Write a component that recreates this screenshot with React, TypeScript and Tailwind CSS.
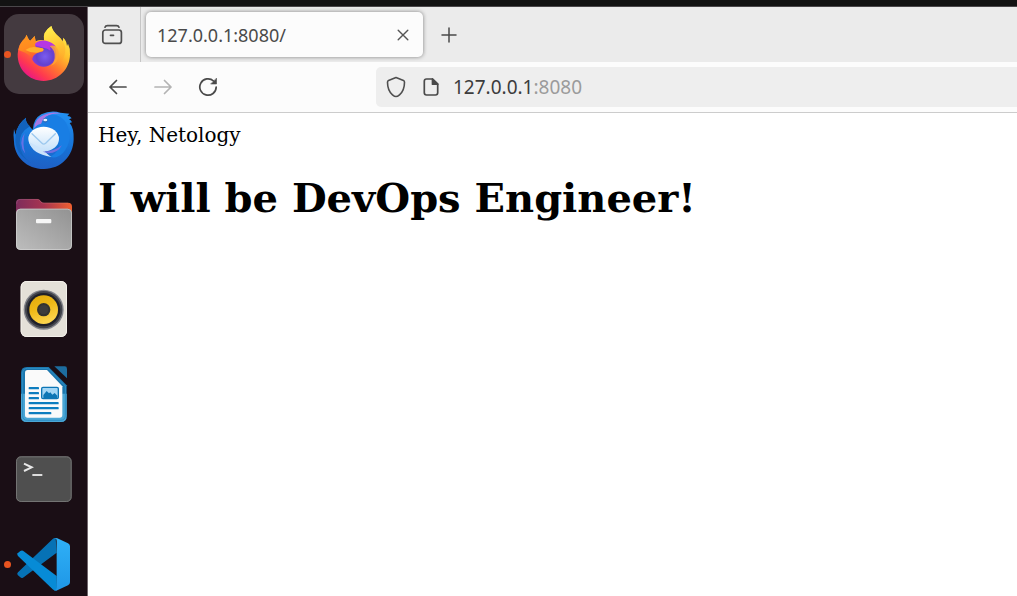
import type { ReactNode } from "react";

type DockEntry = {
  name: string;
  running?: boolean;
  active?: boolean;
  icon: ReactNode;
};

function FirefoxIcon() {
  return (
    <svg viewBox="12 42 240 240" className="size-20" aria-hidden="true">
      <defs>
        <linearGradient id="fxBody" x1="0.85" y1="0.1" x2="0.2" y2="0.95">
          <stop offset="0" stopColor="#ffe94a" />
          <stop offset="0.3" stopColor="#ffc02c" />
          <stop offset="0.55" stopColor="#ff7a2e" />
          <stop offset="0.8" stopColor="#ff3a4e" />
          <stop offset="1" stopColor="#e8148a" />
        </linearGradient>
        <linearGradient id="fxFlame" x1="0.3" y1="0" x2="0.5" y2="1">
          <stop offset="0" stopColor="#fff04f" />
          <stop offset="0.5" stopColor="#ffc833" />
          <stop offset="1" stopColor="#ff8a2a" stopOpacity="0" />
        </linearGradient>
        <radialGradient id="fxGlobe" cx="0.55" cy="0.6" r="0.6">
          <stop offset="0" stopColor="#7a5cf0" />
          <stop offset="0.55" stopColor="#6442cf" />
          <stop offset="1" stopColor="#9a35e0" />
        </radialGradient>
        <linearGradient id="fxHead" x1="0" y1="0" x2="0.3" y2="1">
          <stop offset="0" stopColor="#ff9a1f" />
          <stop offset="0.6" stopColor="#ff8a20" />
          <stop offset="1" stopColor="#ff5a35" />
        </linearGradient>
      </defs>
      <path
        d="M80 104 Q84 118 91 122 L104 108 L107 124 Q118 118 132 121 Q127 96 154 78 Q158 94 174 108 Q184 116 187 126 Q190 120 189 113 Q200 121 201 138 L204 131 Q211 144 210 163 C210 207 175 243 131 243 C86 243 52 207 53 163 Q54 138 67 123 Q78 112 80 104Z"
        fill="url(#fxBody)"
      />
      <path
        d="M132 121 Q127 96 154 78 Q158 94 174 108 C196 126 201 148 191 174 C184 192 172 199 154 203 C170 184 174 157 160 139 C151 127 142 123 132 121Z"
        fill="url(#fxFlame)"
      />
      <circle cx="131" cy="162" r="38" fill="url(#fxGlobe)" />
      <path d="M102 134 Q116 119 138 122 Q158 126 168 140 Q156 136 149 140 Q153 147 151 152 Q143 144 130 143Z" fill="#b637e3" />
      <path d="M149 139 Q167 151 164 174 Q162 189 151 198 Q173 191 176 168 Q178 149 166 139 Q158 134 149 139Z" fill="#ffa534" opacity="0.85" />
      <path
        d="M80 104 Q84 118 91 122 L104 108 Q106 120 107 125 Q103 134 108 142 L128 145 Q133 148 129 154 L112 159 Q98 165 97 177 Q88 164 76 158 L55 150 Q58 133 67 123 Q78 112 80 104Z"
        fill="url(#fxHead)"
      />
      <path d="M76 150 Q92 139 108 142 L127 145 Q133 147 129 153 L111 158 Q92 159 76 150Z" fill="#ffb02c" />
    </svg>
  );
}

function ThunderbirdIcon() {
  return (
    <svg viewBox="12 -3 240 240" className="size-20" aria-hidden="true">
      <defs>
        <linearGradient id="tbBody" x1="0.5" y1="0" x2="0.4" y2="1">
          <stop offset="0" stopColor="#2290f2" />
          <stop offset="0.6" stopColor="#1671d6" />
          <stop offset="1" stopColor="#1f5fc4" />
        </linearGradient>
        <linearGradient id="tbMail" x1="0" y1="0" x2="0" y2="1">
          <stop offset="0" stopColor="#ffffff" />
          <stop offset="1" stopColor="#c5e1fa" />
        </linearGradient>
      </defs>
      <path
        d="M42 87 L47 104 Q51 73 78 53 Q76 66 88 78 Q94 85 98 89 Q100 56 124 43 Q153 29 181 38 L208 41 L202 48 Q211 48 215 55 L207 58 Q214 61 216 67 L209 69 Q222 84 221 118 C220 168 183 207 132 207 C80 207 43 170 42 125 Q39 104 42 87Z"
        fill="url(#tbBody)"
      />
      <path d="M47 104 Q51 73 78 53 Q75 67 90 79 Q58 97 59 130 Q61 170 93 188 Q56 168 49 139 Q44 121 47 104Z" fill="#1262bd" />
      <path d="M74 99 Q52 131 76 161 Q66 132 74 99Z" fill="#6572e5" />
      <path d="M102 85 Q104 56 131 45 Q157 32 184 41 Q155 39 137 51 Q128 59 124 71 Q112 72 102 85Z" fill="#a778e6" />
      <path d="M124 71 Q128 54 147 46 Q179 38 199 70 Q223 119 189 159 Q170 178 148 170 Q183 156 178 116 Q172 85 137 80Z" fill="#197ee4" />
      <ellipse cx="131" cy="117" rx="46" ry="37" fill="url(#tbMail)" />
      <path d="M88 126 Q94 161 154 171 Q138 160 133 151Z" fill="#cce4fb" />
      <path d="M96 101 L126 130 Q131 135 137 130 L166 101" fill="none" stroke="#9cc8ee" strokeWidth="4" strokeLinecap="round" />
      <path d="M128 155 Q162 155 186 136 Q173 160 145 160Z" fill="#706fe0" />
      <circle cx="136" cy="61" r="7" fill="#2c68bc" />
      <ellipse cx="136" cy="60" rx="6" ry="4" fill="#dff2ff" />
    </svg>
  );
}

function FilesIcon() {
  return (
    <svg viewBox="12 -3 240 240" className="size-20" aria-hidden="true">
      <defs>
        <linearGradient id="flBack" x1="0" y1="0" x2="1" y2="0">
          <stop offset="0" stopColor="#7d2c5c" />
          <stop offset="0.5" stopColor="#a83550" />
          <stop offset="1" stopColor="#ef6030" />
        </linearGradient>
        <linearGradient id="flFront" x1="1" y1="0" x2="0" y2="1">
          <stop offset="0" stopColor="#929292" />
          <stop offset="1" stopColor="#bdbdbd" />
        </linearGradient>
      </defs>
      <path d="M48 100 V54 Q48 42 60 42 H112 Q117 42 120 46 L125 51 Q127 53 132 53 H204 Q216 53 216 65 V100Z" fill="url(#flBack)" />
      <path d="M50 56 Q50 43 62 43 H112 Q117 43 120 47 L124 52 Q127 54 132 54 H204" fill="none" stroke="#ffffff" strokeOpacity="0.2" strokeWidth="2" />
      <rect x="48" y="71" width="168" height="124" rx="13" fill="url(#flFront)" />
      <rect x="49.500" y="72.500" width="165" height="121" rx="12" fill="none" stroke="#d8d8d8" strokeOpacity="0.6" strokeWidth="3" />
      <rect x="108" y="102" width="46" height="13" rx="3" fill="#f6f6f6" />
    </svg>
  );
}

function MusicIcon() {
  return (
    <svg viewBox="12 -3 240 240" className="size-20" aria-hidden="true">
      <defs>
        <linearGradient id="muCone" x1="0" y1="0" x2="0.4" y2="1">
          <stop offset="0" stopColor="#dfa90b" />
          <stop offset="0.5" stopColor="#efb917" />
          <stop offset="1" stopColor="#fbd34b" />
        </linearGradient>
      </defs>
      <rect x="62" y="33" width="139" height="168" rx="17" fill="#e4e0d8" />
      <rect x="63.500" y="34.500" width="136" height="165" rx="16" fill="none" stroke="#f3f0ea" strokeWidth="3" />
      <circle cx="131" cy="119" r="60" fill="#84858b" />
      <circle cx="131" cy="119" r="56" fill="#42444c" />
      <circle cx="131" cy="119" r="50" fill="#1f2029" />
      <circle cx="131" cy="119" r="43" fill="url(#muCone)" />
      <circle cx="131" cy="119" r="20" fill="#33332f" />
      <circle cx="131" cy="119" r="14" fill="#3c3c3c" />
    </svg>
  );
}

function WriterIcon() {
  return (
    <svg viewBox="12 -3 240 240" className="size-20" aria-hidden="true">
      <path d="M80 36 H146 L200 91 V183 Q200 201 182 201 H80 Q63 201 63 183 V54 Q63 36 80 36Z" fill="#1b76ad" />
      <path d="M63 116 H200 V183 Q200 201 182 201 H80 Q63 201 63 183Z" fill="#4ba6d4" />
      <path d="M82 40 H144 L196 93 V181 Q196 196 180 196 H83 Q68 196 68 181 V55 Q68 40 82 40Z" fill="none" stroke="#2e8fc5" strokeWidth="3" />
      <path d="M83 45 H141 L187 94 V180 Q187 188 179 188 H83 Q75 188 75 180 V53 Q75 45 83 45Z" fill="#fafafa" />
      <path d="M163 34 H194 Q201 34 201 41 V70Z" fill="#1d6d9f" />
      <g fill="#0d7dbf">
        <rect x="86" y="96" width="31" height="7" rx="2" />
        <rect x="86" y="111" width="31" height="7" rx="2" />
        <rect x="86" y="126" width="31" height="7" rx="2" />
        <rect x="86" y="141" width="90" height="7" rx="2" />
        <rect x="86" y="156" width="90" height="7" rx="2" />
        <rect x="86" y="171" width="68" height="7" rx="2" />
      </g>
      <rect x="125" y="97" width="50" height="34" rx="4" fill="#a3d6f5" stroke="#0d76b5" strokeWidth="4" />
      <path d="M130 129 V120 L140 108 L147 115 L151 112 L157 119 L164 114 L172 122 V129Z" fill="#0d76b5" />
    </svg>
  );
}

function TerminalIcon() {
  return (
    <svg viewBox="12 -3 240 240" className="size-20" aria-hidden="true">
      <rect x="48" y="49" width="167" height="137" rx="15" fill="#4f4f4f" />
      <rect x="49.500" y="50.500" width="164" height="134" rx="14" fill="none" stroke="#737373" strokeWidth="3" />
      <path d="M72 71 L95 82 L72 93" fill="none" stroke="#e8e8e8" strokeWidth="6" />
      <rect x="97" y="102" width="30" height="6" fill="#dcdcdc" />
    </svg>
  );
}

function CodeIcon() {
  return (
    <svg viewBox="12 12 240 240" className="size-20" aria-hidden="true">
      <defs>
        <linearGradient id="vsRight" x1="0" y1="0" x2="0" y2="1">
          <stop offset="0" stopColor="#2fb0f7" />
          <stop offset="1" stopColor="#1f97e6" />
        </linearGradient>
      </defs>
      <path d="M167 54 L170 98 L69 173 Q65 176 61 172 L53 165 Q50 161 54 157 L158 57 Q162 53 167 54Z" fill="#0672b5" />
      <path d="M170 168 L69 92 Q65 90 61 93 L53 100 Q50 104 54 108 L158 208 Q164 213 171 211Z" fill="#078bd6" />
      <path d="M162 55 Q167 53 172 55 L204 70 Q210 73 210 79 V187 Q210 193 204 196 L172 211 Q166 213 160 209 Q170 212 170 203 V63 Q170 54 162 55Z" fill="url(#vsRight)" />
    </svg>
  );
}

const dockEntries: DockEntry[] = [
  { name: "Firefox", running: true, active: true, icon: <FirefoxIcon /> },
  { name: "Thunderbird", icon: <ThunderbirdIcon /> },
  { name: "Files", icon: <FilesIcon /> },
  { name: "Rhythmbox", icon: <MusicIcon /> },
  { name: "LibreOffice Writer", icon: <WriterIcon /> },
  { name: "Terminal", icon: <TerminalIcon /> },
  { name: "Visual Studio Code", running: true, icon: <CodeIcon /> },
];

function Dock() {
  return (
    <nav
      aria-label="Dock"
      className="flex w-[88px] shrink-0 flex-col gap-[5px] overflow-hidden border-r border-[#71676d] bg-[#1a0e15] pt-[7px] pl-1"
    >
      {dockEntries.map((entry) => (
        <button
          key={entry.name}
          type="button"
          aria-label={entry.name}
          className={
            entry.active
              ? "relative size-20 shrink-0 rounded-[15px] bg-[#443a40]"
              : "relative size-20 shrink-0 rounded-[15px]"
          }
        >
          {entry.icon}
          {entry.running && (
            <span className="absolute top-[37px] left-0 size-[7px] rounded-full bg-[#e95420]" />
          )}
        </button>
      ))}
    </nav>
  );
}

function TabStrip() {
  return (
    <div className="flex h-[55px] shrink-0 items-center bg-[#ebebeb]">
      <button
        type="button"
        aria-label="Recent browsing"
        className="flex h-full w-[53px] items-center justify-center border-r border-[#c6c6c6] pr-1"
      >
        <svg viewBox="0 0 22 22" className="size-[22px]" fill="none" stroke="#4f4f4f" strokeWidth="1.7" strokeLinecap="round" aria-hidden="true">
          <path d="M4 3.200 Q4.500 1.600 6.500 1.600 H15.500 Q17.500 1.600 18 3.200" />
          <rect x="1.800" y="6" width="18.600" height="13.400" rx="2.500" />
          <path d="M9.500 11.300 H12.500" />
        </svg>
      </button>
      <div className="ml-[5px] flex h-[45px] w-[277px] items-center justify-between rounded-[5px] bg-[#fcfcfc] pr-2 pl-[11px] shadow-[0_0_4px_rgba(0,0,0,0.45)]">
        <span className="text-[18px] leading-6 text-[#4a4a4a]">127.0.0.1:8080/</span>
        <button type="button" aria-label="Close tab" className="flex size-6 items-center justify-center">
          <svg viewBox="0 0 12 12" className="size-3" stroke="#555555" strokeWidth="1.400" strokeLinecap="round" aria-hidden="true">
            <path d="M1.200 1.200 L10.800 10.800 M10.800 1.200 L1.200 10.800" />
          </svg>
        </button>
      </div>
      <button type="button" aria-label="New tab" className="ml-[14px] flex size-6 items-center justify-center">
        <svg viewBox="0 0 16 16" className="size-4" stroke="#4a4a4a" strokeWidth="1.500" strokeLinecap="round" aria-hidden="true">
          <path d="M8 1 V15 M1 8 H15" />
        </svg>
      </button>
    </div>
  );
}

function NavBar() {
  return (
    <div className="flex h-[51px] shrink-0 items-center border-b border-[#cccccc] bg-[#fcfcfc]">
      <div className="ml-4 flex w-[272px] items-center gap-[17px]">
        <button type="button" aria-label="Back" className="flex size-7 items-center justify-center">
          <svg viewBox="0 0 20 20" className="size-5" fill="none" stroke="#4a4a4a" strokeWidth="1.700" strokeLinecap="round" strokeLinejoin="round" aria-hidden="true">
            <path d="M18 10 H2 M8.500 3.500 L2 10 L8.500 16.500" />
          </svg>
        </button>
        <button type="button" aria-label="Forward" disabled className="flex size-7 items-center justify-center">
          <svg viewBox="0 0 20 20" className="size-5" fill="none" stroke="#b3b3b3" strokeWidth="1.700" strokeLinecap="round" strokeLinejoin="round" aria-hidden="true">
            <path d="M2 10 H18 M11.500 3.500 L18 10 L11.500 16.500" />
          </svg>
        </button>
        <button type="button" aria-label="Reload" className="flex size-7 items-center justify-center">
          <svg viewBox="0 0 20 20" className="size-5" fill="none" stroke="#4a4a4a" strokeWidth="1.700" strokeLinecap="round" aria-hidden="true">
            <path d="M18.200 10 A8.200 8.200 0 1 1 15.600 4" />
            <path d="M18.500 1.500 V7 H13Z" fill="#4a4a4a" strokeWidth="0.600" strokeLinejoin="round" />
          </svg>
        </button>
      </div>
      <div className="flex h-10 min-w-0 flex-1 items-center rounded-l-[5px] bg-[#eeeeee] pl-[10px]">
        <button type="button" aria-label="Tracking protection" className="flex w-5 items-center justify-center">
          <svg viewBox="0 0 20 22" className="h-[22px] w-5 shrink-0" fill="none" stroke="#4f4f4f" strokeWidth="1.600" strokeLinejoin="round" aria-hidden="true">
            <path d="M10 1.500 L17.500 4.600 Q18.500 5 18.500 6.200 Q18.500 14.500 13.500 18.800 Q11.500 20.500 10 20.500 Q8.500 20.500 6.500 18.800 Q1.500 14.500 1.500 6.200 Q1.500 5 2.500 4.600Z" />
          </svg>
        </button>
        <button type="button" aria-label="Site information" className="ml-[15px] flex w-5 items-center justify-center">
          <svg viewBox="0 0 18 20" className="h-5 w-[18px] shrink-0" fill="none" stroke="#4a4a4a" strokeWidth="1.700" strokeLinejoin="round" aria-hidden="true">
            <path d="M10.500 2 H4.500 Q2.300 2 2.300 4.200 V15.800 Q2.300 18 4.500 18 H13.500 Q15.700 18 15.700 15.800 V7.200Z" />
            <path d="M10.500 2 V7.200 H15.700Z" fill="#4a4a4a" />
          </svg>
        </button>
        <div
          role="textbox"
          aria-label="Address"
          contentEditable
          suppressContentEditableWarning
          className="ml-3 min-w-0 flex-1 text-[19px] leading-6 whitespace-nowrap text-[#3c3c3c] outline-none"
        >
          127.0.0.1<span className="text-[#9b9b9b]">:8080</span>
        </div>
      </div>
    </div>
  );
}

export default function App() {
  return (
    <div className="flex h-screen flex-col overflow-hidden bg-white font-['Noto_Sans','Open_Sans',sans-serif]">
      <header className="h-[7px] shrink-0 border-b border-[#4a474a] bg-[#131313]" />
      <div className="flex min-h-0 flex-1">
        <Dock />
        <div className="flex min-w-0 flex-1 flex-col">
          <TabStrip />
          <NavBar />
          <main className="flex-1 bg-white px-[10px] pt-[10px] font-['DejaVu_Serif',serif] text-black">
            <p className="text-[20px] leading-6">Hey, Netology</p>
            <h1 className="mt-[27px] text-[40px] leading-[48px] font-bold">I will be DevOps Engineer!</h1>
          </main>
        </div>
      </div>
    </div>
  );
}
